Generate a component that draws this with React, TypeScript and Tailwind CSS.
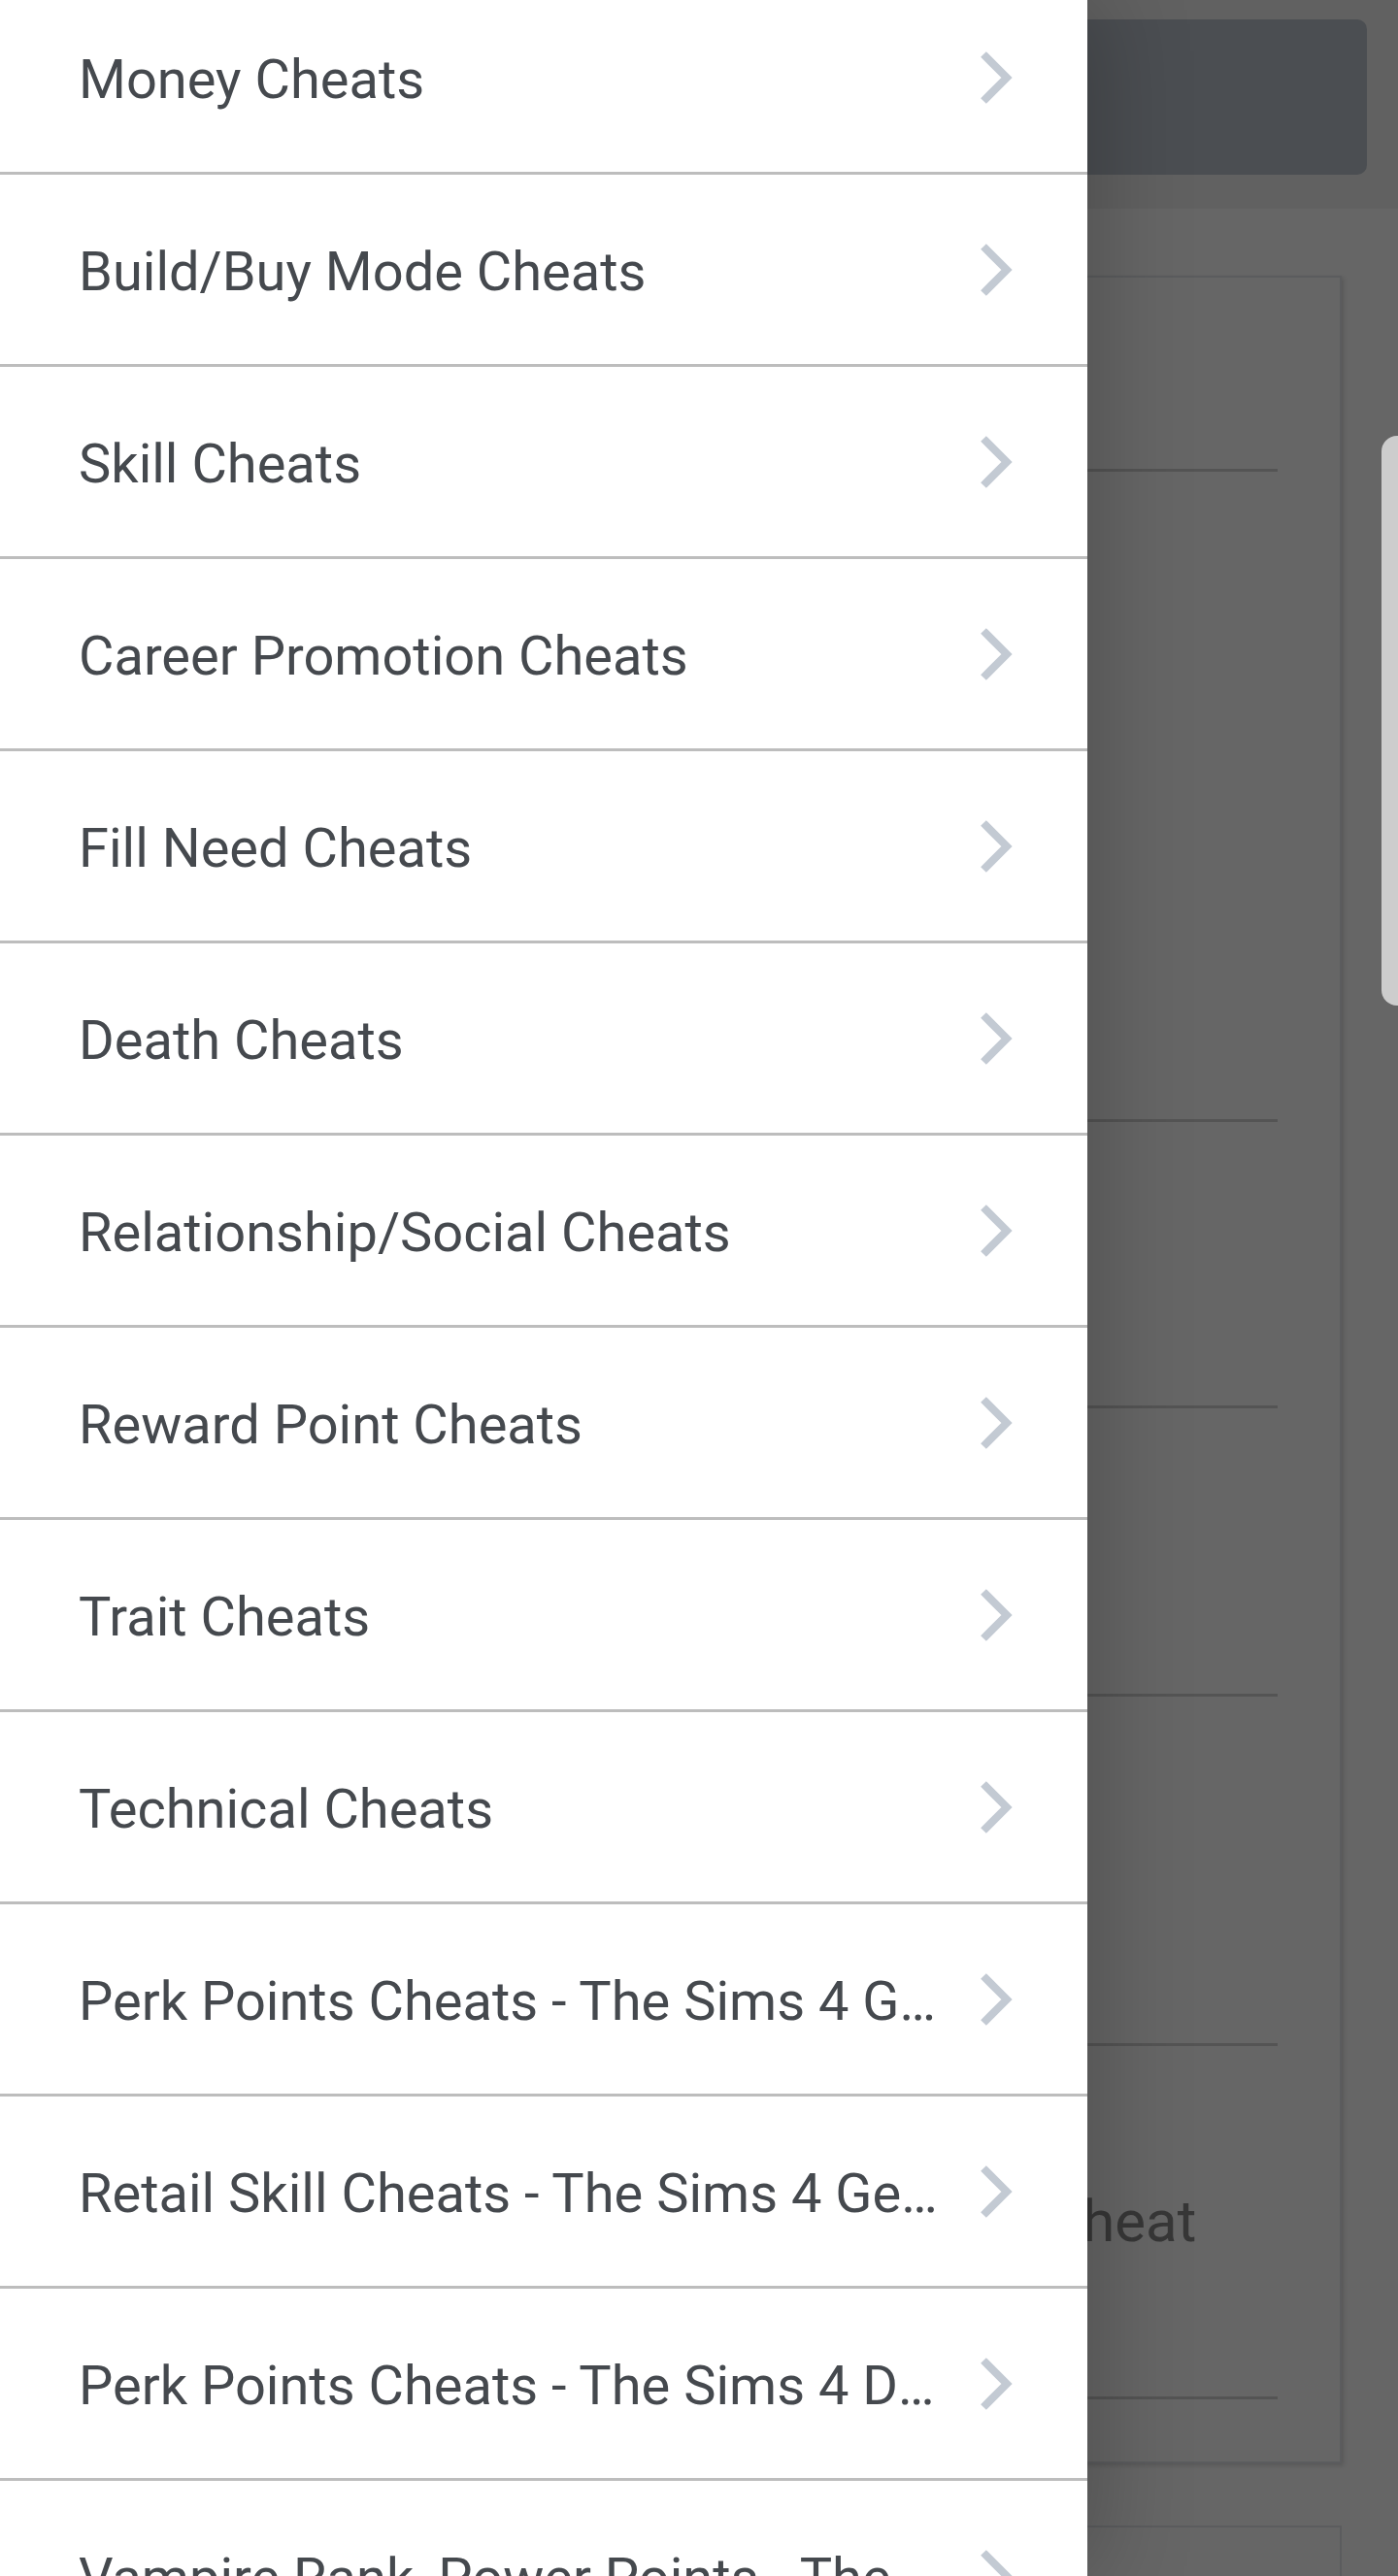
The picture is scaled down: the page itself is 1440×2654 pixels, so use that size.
import { useState } from 'react';

const SECTIONS = [
  'Money Cheats',
  'Build/Buy Mode Cheats',
  'Skill Cheats',
  'Career Promotion Cheats',
  'Fill Need Cheats',
  'Death Cheats',
  'Relationship/Social Cheats',
  'Reward Point Cheats',
  'Trait Cheats',
  'Technical Cheats',
  'Perk Points Cheats - The Sims 4 Get Famous',
  'Retail Skill Cheats - The Sims 4 Get to Work',
  'Perk Points Cheats - The Sims 4 Discover University',
  'Vampire Rank, Power Points - The Sims 4 Vampires',
];

function Chevron() {
  return (
    <svg width="40" height="60" viewBox="0 0 40 60" className="shrink-0">
      <path d="M9 6 L33 30 L9 54" fill="none" stroke="#c3cad3" strokeWidth="8" />
    </svg>
  );
}

export default function App() {
  const [open, setOpen] = useState(true);

  return (
    <div className="relative h-[2654px] w-[1440px] overflow-hidden bg-[#666666] font-['Roboto','Liberation_Sans',sans-serif]">
      {/* page behind the dimmed overlay */}
      <div className="h-[215px] bg-[#616161] pt-[20px] pl-[32px] pr-[32px]">
        <div className="h-[160px] rounded-[10px] bg-[#4b4e52]" />
      </div>

      <div className="flex flex-col gap-[64px] pt-[69px] pl-[32px] pr-[58px]">
        <div className="h-[2254px] border-2 border-[#5b5c5e] bg-[#666666] pr-[64px] shadow-[2px_2px_4px_rgba(0,0,0,0.15)]">
          <div className="h-[200px] border-b-[3px] border-[#545454]" />
          <div className="h-[670px] border-b-[3px] border-[#545454]" />
          <div className="h-[295px] border-b-[3px] border-[#545454]" />
          <div className="h-[297px] border-b-[3px] border-[#545454]" />
          <div className="h-[360px] border-b-[3px] border-[#545454]" />
          <div className="flex h-[364px] items-center border-b-[3px] border-[#545454] pl-[927px]">
            <span className="text-[60px] text-[#373737]">Log Cheat</span>
          </div>
        </div>
        <div className="h-[400px] border-2 border-[#5b5c5e] bg-[#666666]" />
      </div>

      {/* floating handle on the right */}
      <div className="absolute right-0 top-[449px] h-[587px] w-[17px] rounded-l-[16px] bg-[#cdcdcd]" />

      {/* drawer */}
      {open && (
        <nav className="absolute left-0 top-0 bottom-0 w-[1120px] bg-white shadow-[12px_0_90px_rgba(0,0,0,0.22)]">
          <ul className="-mt-[18px]">
            {SECTIONS.map((s) => (
              <li
                key={s}
                onClick={() => setOpen(true)}
                className="flex h-[198px] items-center gap-[32px] border-b-[3px] border-[#bdbdbd] pl-[81px] pr-[76px]"
              >
                <span className="min-w-0 flex-1 truncate pt-[6px] text-[56px] leading-[1.3] text-[#45494e]">{s}</span>
                <Chevron />
              </li>
            ))}
          </ul>
        </nav>
      )}
    </div>
  );
}
